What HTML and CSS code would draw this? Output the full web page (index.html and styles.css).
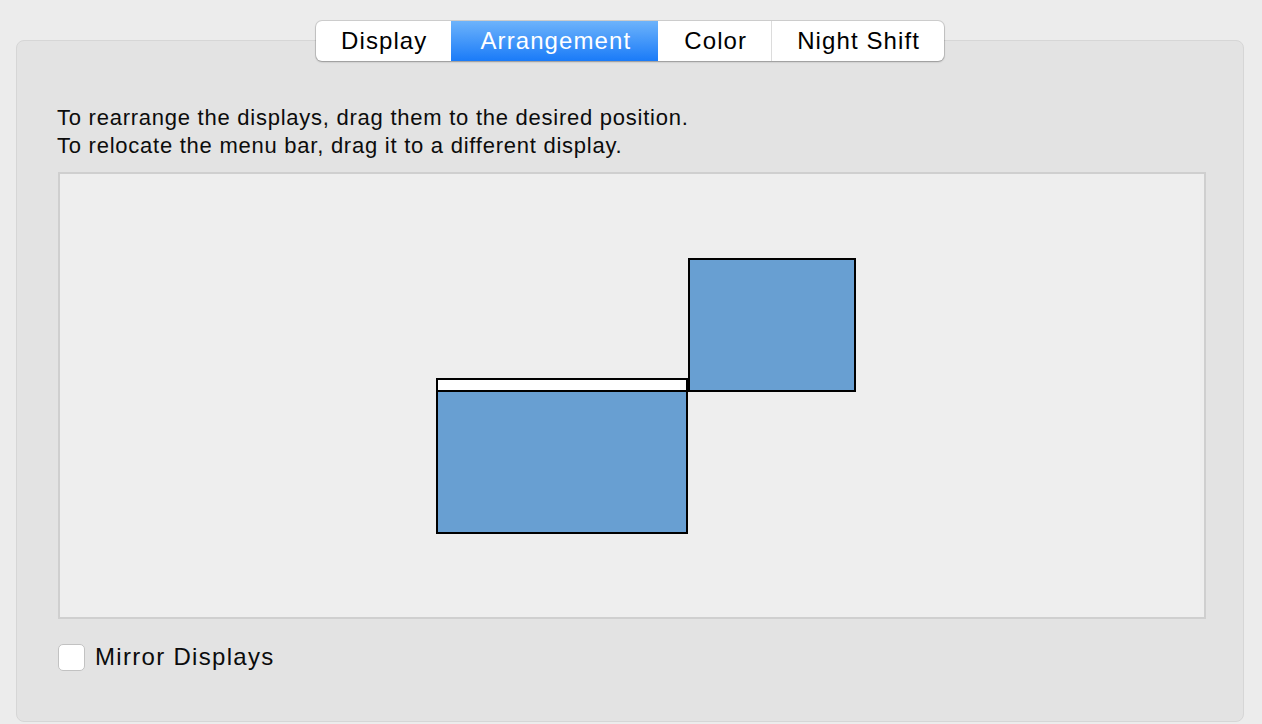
FILE: index.html
```html
<!DOCTYPE html>
<html lang="en">
<head>
    <link rel="stylesheet" href="styles.css">
</head>
<body>
    <div class="window">
        <div class="tabs">
            <button class="tab">Display</button>
            <button class="tab active">Arrangement</button>
            <button class="tab">Color</button>
            <button class="tab">Night Shift</button>
        </div>

        <div class="panel">
            <p class="hint">
                To rearrange the displays, drag them to the desired position.<br>
                To relocate the menu bar, drag it to a different display.
            </p>

            <div class="arrangement">
                <!-- main display carries the menu bar -->
                <div class="screen main">
                    <div class="menubar"></div>
                </div>
                <div class="screen secondary"></div>
            </div>

            <label class="mirror">
                <span class="checkbox"></span>
                Mirror Displays
            </label>
        </div>
    </div>
</body>
</html>
```

FILE: styles.css
```css
/* System preferences - Displays pane */
body {
    margin: 0;
    background-color: #ececec;
    font-family: "Helvetica Neue", "Liberation Sans", Arial, sans-serif;
    color: #0c0c0c;
}
.window {
    padding: 21px 18px 0 16px;
}
.tabs {
    position: relative;
    z-index: 1;
    display: flex;
    width: fit-content;
    margin: 0 auto;
    background-color: #fff;
    border-radius: 6px;
    box-shadow: 0 0 0 1px rgba(0, 0, 0, 0.12), 0 1px 2px rgba(0, 0, 0, 0.25);
    overflow: hidden;
}
.tab {
    height: 40px;
    padding: 0 24px 0 25px;
    border: none;
    border-left: 1px solid #dcdcdc;
    background: none;
    font-family: inherit;
    font-size: 24px;
    letter-spacing: 1.1px;
    color: #000;
}
.tab:first-child {
    border-left: none;
}
.tab.active {
    padding: 0 27px 0 28px;
    background: linear-gradient(#6db3fb, #1a7bf8);
    color: #fff;
    border-left-color: transparent;
}
.tab.active + .tab {
    border-left-color: transparent;
}
.panel {
    margin-top: -21px;
    height: 682px;
    padding: 63px 37px 0 41px;
    box-sizing: border-box;
    background-color: #e3e3e3;
    border: 1px solid #d6d6d6;
    border-radius: 8px;
}
.hint {
    margin: 0 0 12px -1px;
    font-size: 22px;
    letter-spacing: 0.75px;
    line-height: 28px;
}
.arrangement {
    position: relative;
    height: 443px;
    background-color: #eeeeee;
    border: 2px solid #cfcfcf;
}
/* display boxes sit on the canvas at their virtual coordinates */
.screen {
    position: absolute;
    box-sizing: border-box;
    border: 2px solid #000;
    background-color: #689fd2;
}
.main {
    left: 376px;
    top: 204px;
    width: 252px;
    height: 156px;
}
.menubar {
    height: 10px;
    background-color: #fff;
    border-bottom: 2px solid #000;
}
.secondary {
    left: 628px;
    top: 84px;
    width: 168px;
    height: 134px;
}
.mirror {
    display: flex;
    align-items: center;
    gap: 10px;
    margin-top: 24px;
    font-size: 24px;
    letter-spacing: 1.3px;
}
.checkbox {
    width: 25px;
    height: 25px;
    background-color: #fff;
    border: 1px solid #c2c2c2;
    border-radius: 5px;
}
```
